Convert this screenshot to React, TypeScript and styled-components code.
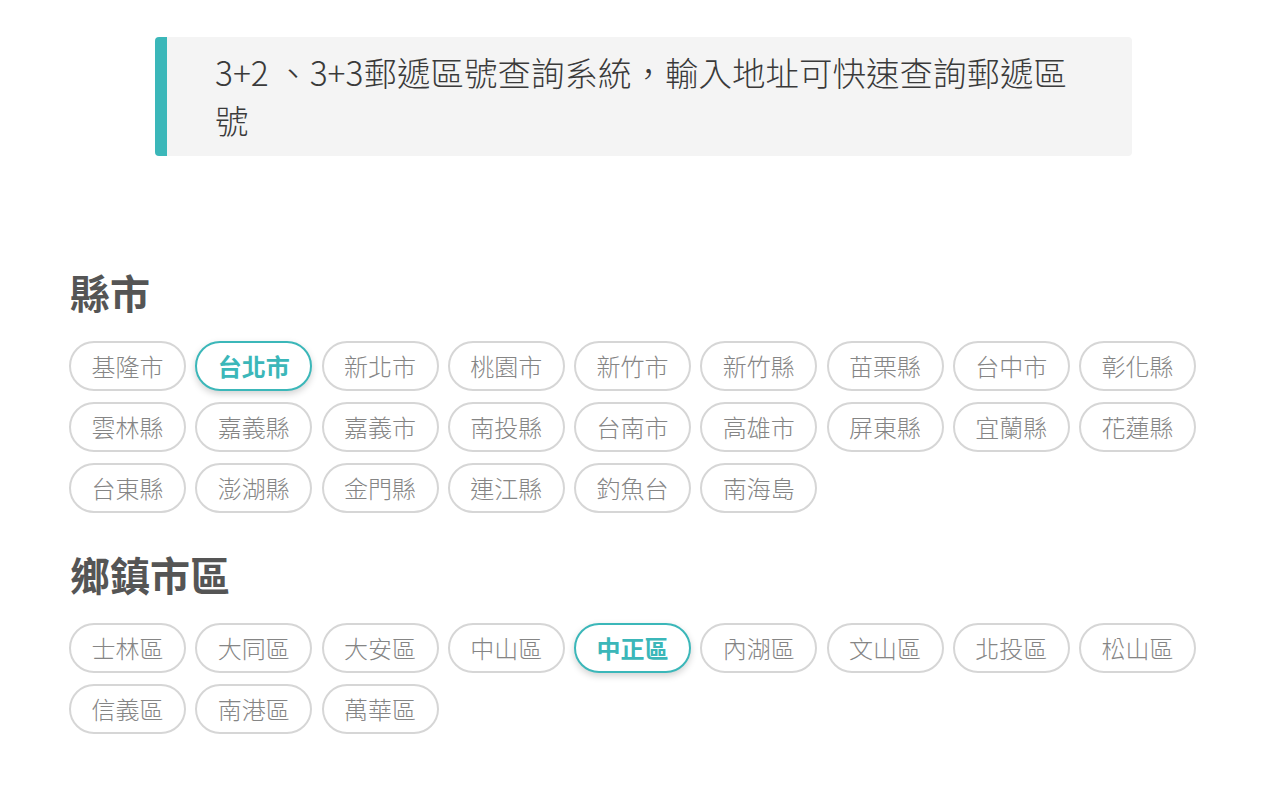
import styled, { createGlobalStyle } from "styled-components";

const GlobalStyle = createGlobalStyle`
  body {
    margin: 0;
    background: #fff;
    font-family: "Noto Sans CJK TC", "Noto Sans", sans-serif;
  }
`;

const Page = styled.div`
  padding: 37px 0 40px;
`;

const Quote = styled.blockquote`
  margin: 0 148px 0 155px;
  padding: 11px 48px 13px;
  background: #f4f4f4;
  border-left: 12px solid #3bb7b9;
  border-radius: 4px;
  font-size: 33.5px;
  font-weight: 300;
  line-height: 47.5px;
  color: #3a3a3a;
`;

const Section = styled.section<{ $top: number }>`
  padding: 0 0 0 69px;
  margin-top: ${(p) => p.$top}px;
`;

const Heading = styled.h2`
  margin: 0 0 25px 1px;
  font-size: 40px;
  font-weight: 700;
  line-height: 48px;
  color: #555;
`;

const PillList = styled.div`
  display: flex;
  flex-wrap: wrap;
  gap: 11px 9.25px;
  width: 1140px;
`;

const Pill = styled.button<{ $active?: boolean }>`
  box-sizing: border-box;
  width: 117px;
  height: 50px;
  padding: 0;
  border-radius: 25px;
  background: #fff;
  font-family: "Noto Sans CJK TC", sans-serif;
  font-size: 24px;
  line-height: 1;
  cursor: pointer;
  border: 2px solid ${(p) => (p.$active ? "#3bb7b9" : "#d6d6d6")};
  color: ${(p) => (p.$active ? "#3bb7b9" : "#858585")};
  font-weight: ${(p) => (p.$active ? 700 : 300)};
  box-shadow: ${(p) => (p.$active ? "0 3px 7px rgba(0, 0, 0, 0.18)" : "none")};
`;

const counties = [
  "基隆市", "台北市", "新北市", "桃園市", "新竹市", "新竹縣", "苗栗縣", "台中市", "彰化縣",
  "雲林縣", "嘉義縣", "嘉義市", "南投縣", "台南市", "高雄市", "屏東縣", "宜蘭縣", "花蓮縣",
  "台東縣", "澎湖縣", "金門縣", "連江縣", "釣魚台", "南海島",
];

const districts = [
  "士林區", "大同區", "大安區", "中山區", "中正區", "內湖區", "文山區", "北投區", "松山區",
  "信義區", "南港區", "萬華區",
];

export default function App() {
  return (
    <Page>
      <GlobalStyle />
      <Quote>3+2 、3+3郵遞區號查詢系統，輸入地址可快速查詢郵遞區號</Quote>

      <Section $top={112}>
        <Heading>縣市</Heading>
        <PillList>
          {counties.map((c) => (
            <Pill key={c} $active={c === "台北市"}>{c}</Pill>
          ))}
        </PillList>
      </Section>

      <Section $top={37}>
        <Heading>鄉鎮市區</Heading>
        <PillList>
          {districts.map((d) => (
            <Pill key={d} $active={d === "中正區"}>{d}</Pill>
          ))}
        </PillList>
      </Section>
    </Page>
  );
}
